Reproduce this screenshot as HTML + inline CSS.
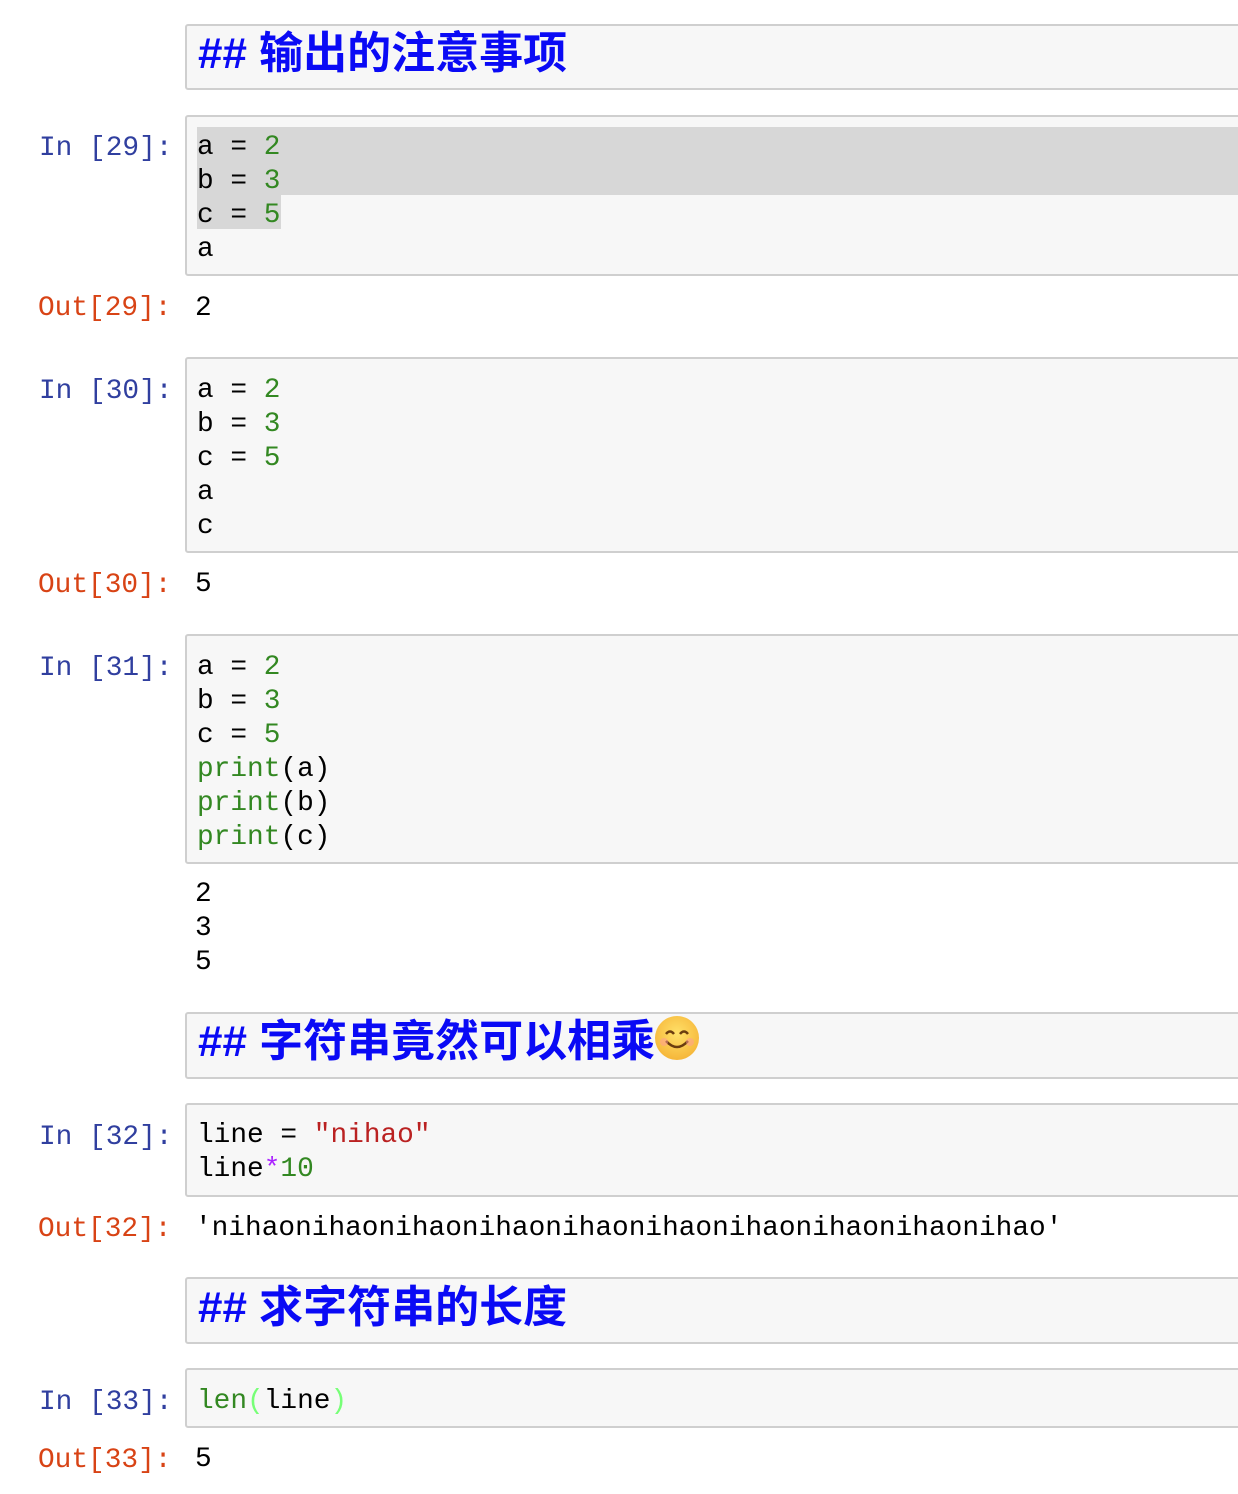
<!DOCTYPE html>
<html><head><meta charset="utf-8"><style>
*{margin:0;padding:0;box-sizing:border-box}
body{width:1238px;height:1494px;background:#fff;position:relative;overflow:hidden;font-family:"Liberation Mono","Noto Sans CJK SC",monospace;font-size:27.8px}
.box{position:absolute;left:185px;width:1070px;background:#f7f7f7;border:2px solid #cfcfcf;border-radius:3px}
.t{position:absolute;line-height:34px;white-space:pre;color:#000;margin-top:3px}
.in{position:absolute;left:39px;line-height:34px;color:#303f9f;white-space:pre;margin-top:3px}
.out{position:absolute;left:38px;line-height:34px;color:#d84315;white-space:pre;margin-top:3px}
.g{color:#338822}.s{color:#ba2121}.p{color:#aa22ff}.lg{color:#7f7}
.h{position:absolute;left:198px;font-family:"Liberation Sans","Noto Sans CJK SC",sans-serif;font-weight:bold;font-size:44px;color:#0a0af5;line-height:60px;white-space:pre;margin-top:1px}
.hl{position:absolute;background:#d7d7d7}
.emo{display:inline-block;width:44px;height:44px;border-radius:50%;background:radial-gradient(circle at 50% 40%,#ffe169,#f3a92b);vertical-align:-4px;position:relative}
</style></head><body>

<div class="box" style="top:24px;height:66px"></div>
<div class="h" style="top:23px">## 输出的注意事项</div>

<div class="box" style="top:115px;height:161px"></div>
<div class="hl" style="left:197px;top:127px;width:1041px;height:68px"></div>
<div class="hl" style="left:197px;top:195px;width:84px;height:34px"></div>
<div class="in" style="top:129px">In [29]:</div>
<div class="t" style="left:197px;top:128px">a = <span class="g">2</span>
b = <span class="g">3</span>
c = <span class="g">5</span>
a</div>
<div class="out" style="top:289px">Out[29]:</div>
<div class="t" style="left:195px;top:289px">2</div>

<div class="box" style="top:357px;height:196px"></div>
<div class="in" style="top:372px">In [30]:</div>
<div class="t" style="left:197px;top:371px">a = <span class="g">2</span>
b = <span class="g">3</span>
c = <span class="g">5</span>
a
c</div>
<div class="out" style="top:566px">Out[30]:</div>
<div class="t" style="left:195px;top:565px">5</div>

<div class="box" style="top:634px;height:230px"></div>
<div class="in" style="top:649px">In [31]:</div>
<div class="t" style="left:197px;top:648px">a = <span class="g">2</span>
b = <span class="g">3</span>
c = <span class="g">5</span>
<span class="g">print</span>(a)
<span class="g">print</span>(b)
<span class="g">print</span>(c)</div>
<div class="t" style="left:195px;top:875px">2
3
5</div>

<div class="box" style="top:1012px;height:67px"></div>
<div class="h" style="top:1011px">## 字符串竟然可以相乘<span class="emo"><svg width="44" height="44" viewBox="0 0 44 44" style="position:absolute;left:0;top:0"><path d="M11 18 q4 -5 8 0 M25 18 q4 -5 8 0" stroke="#6b3d0f" stroke-width="2.5" fill="none"/><path d="M11 25 q11 12 22 0" stroke="#6b3d0f" stroke-width="2.5" fill="none"/><circle cx="9" cy="26" r="4" fill="#f99" opacity=".5"/><circle cx="35" cy="26" r="4" fill="#f99" opacity=".5"/></svg></span></div>

<div class="box" style="top:1103px;height:94px"></div>
<div class="in" style="top:1118px">In [32]:</div>
<div class="t" style="left:197px;top:1116px">line = <span class="s">"nihao"</span>
line<span class="p">*</span><span class="g">10</span></div>
<div class="out" style="top:1210px">Out[32]:</div>
<div class="t" style="left:195px;top:1209px">'nihaonihaonihaonihaonihaonihaonihaonihaonihaonihao'</div>

<div class="box" style="top:1277px;height:67px"></div>
<div class="h" style="top:1277px">## 求字符串的长度</div>

<div class="box" style="top:1368px;height:60px"></div>
<div class="in" style="top:1383px">In [33]:</div>
<div class="t" style="left:197px;top:1382px"><span class="g">len</span><span class="lg">(</span>line<span class="lg">)</span></div>
<div class="out" style="top:1441px">Out[33]:</div>
<div class="t" style="left:195px;top:1440px">5</div>
</body></html>
